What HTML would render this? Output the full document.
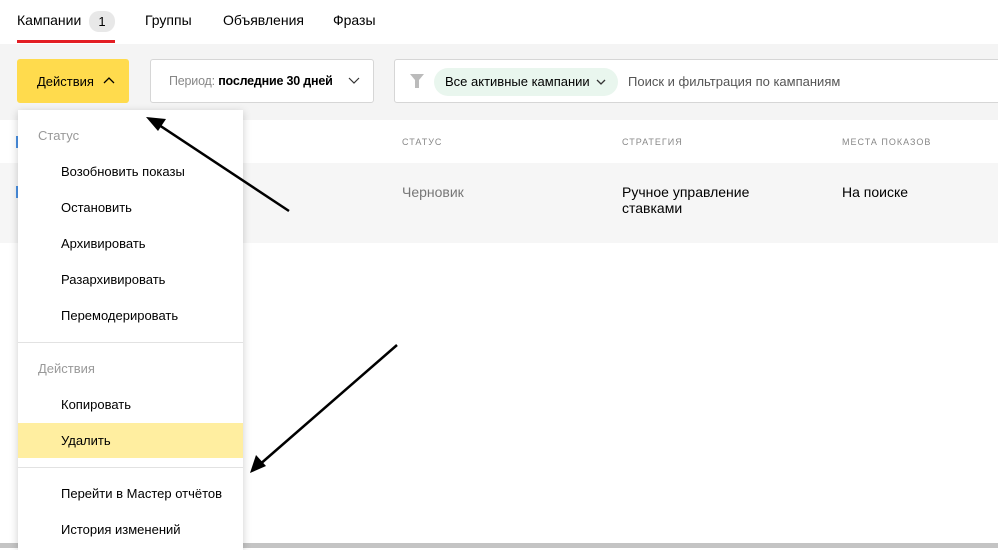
<!DOCTYPE html>
<html><head><meta charset="utf-8"><style>
*{margin:0;padding:0;box-sizing:border-box}
body{width:998px;height:548px;overflow:hidden;position:relative;background:#fff;font-family:"Liberation Sans",sans-serif;font-size:13px;color:#000}
.a{position:absolute}
.tab{top:12px;font-size:14px;color:#000}
.m{left:18px;width:225px;font-size:13px}
.h{color:#999;left:38px}
.it{left:61px}
.cap{font-size:9px;color:#888;letter-spacing:1px;top:137px}
</style></head><body>
<div class="a" style="left:0;top:0;width:998px;height:44px;background:#fff"></div>
<div class="a tab" style="left:17px">Кампании</div>
<div class="a" style="left:89px;top:11px;width:26px;height:21px;border-radius:10px;background:#e8e8e8;font-size:13px;text-align:center;line-height:21px">1</div>
<div class="a tab" style="left:145px">Группы</div>
<div class="a tab" style="left:223px">Объявления</div>
<div class="a tab" style="left:333px">Фразы</div>
<div class="a" style="left:17px;top:40px;width:98px;height:3px;background:#e31e24"></div>
<div class="a" style="left:0;top:44px;width:998px;height:76px;background:#f4f4f4"></div>
<div class="a" style="left:17px;top:59px;width:112px;height:44px;background:#ffdb4d;border-radius:3px"></div>
<div class="a" style="left:37px;top:74px;font-size:13px">Действия</div>
<svg class="a" style="left:103px;top:76px" width="12" height="8"><path d="M1 7L6 2L11 7" fill="none" stroke="#000" stroke-width="1.3"/></svg>
<div class="a" style="left:150px;top:59px;width:224px;height:44px;background:#fff;border:1px solid #d6d6d6;border-radius:3px"></div>
<div class="a" style="left:169px;top:74px;font-size:12.5px;letter-spacing:-0.2px"><span style="color:#888">Период:</span> <b>последние 30 дней</b></div>
<svg class="a" style="left:348px;top:77px" width="12" height="8"><path d="M1 1L6 6L11 1" fill="none" stroke="#333" stroke-width="1.2"/></svg>
<div class="a" style="left:394px;top:59px;width:610px;height:44px;background:#fff;border:1px solid #d6d6d6;border-radius:3px"></div>
<svg class="a" style="left:410px;top:74px" width="14" height="14"><path d="M0 0H14L9 6V14L5 14V6Z" fill="#bbb"/></svg>
<div class="a" style="left:434px;top:68px;width:184px;height:28px;border-radius:14px;background:#e9f6ee"></div>
<div class="a" style="left:445px;top:74px;font-size:13px">Все активные кампании</div>
<svg class="a" style="left:596px;top:79px" width="10" height="6"><path d="M1 1L5 5L9 1" fill="none" stroke="#333" stroke-width="1.3"/></svg>
<div class="a" style="left:628px;top:74px;font-size:13px;color:#555">Поиск и фильтрация по кампаниям</div>
<div class="a cap" style="left:402px">СТАТУС</div>
<div class="a cap" style="left:622px">СТРАТЕГИЯ</div>
<div class="a cap" style="left:842px">МЕСТА ПОКАЗОВ</div>
<div class="a" style="left:0;top:163px;width:998px;height:80px;background:#f6f6f6"></div>
<div class="a" style="left:402px;top:184px;color:#777;font-size:14px">Черновик</div>
<div class="a" style="left:622px;top:184px;font-size:14px;line-height:16px">Ручное управление<br>ставками</div>
<div class="a" style="left:842px;top:184px;font-size:14px">На поиске</div>
<div class="a" style="left:16px;top:136px;width:3px;height:12px;background:#4a90e2"></div>
<div class="a" style="left:16px;top:186px;width:3px;height:12px;background:#4a90e2"></div>
<div class="a" style="left:0;top:543px;width:998px;height:5px;background:#c4c4c4"></div>
<div class="a" style="left:18px;top:110px;width:225px;height:440px;background:#fff;box-shadow:0 2px 8px rgba(0,0,0,.2)"></div>
<div class="a m h" style="top:128px">Статус</div>
<div class="a m it" style="top:164px">Возобновить показы</div>
<div class="a m it" style="top:200px">Остановить</div>
<div class="a m it" style="top:236px">Архивировать</div>
<div class="a m it" style="top:272px">Разархивировать</div>
<div class="a m it" style="top:308px">Перемодерировать</div>
<div class="a" style="left:18px;top:342px;width:225px;height:1px;background:#e2e2e2"></div>
<div class="a m h" style="top:361px">Действия</div>
<div class="a m it" style="top:397px">Копировать</div>
<div class="a" style="left:18px;top:423px;width:225px;height:35px;background:#ffeea0"></div>
<div class="a m it" style="top:433px">Удалить</div>
<div class="a" style="left:18px;top:467px;width:225px;height:1px;background:#e2e2e2"></div>
<div class="a m it" style="top:486px">Перейти в Мастер отчётов</div>
<div class="a m it" style="top:522px">История изменений</div>
<svg class="a" style="left:0;top:0" width="998" height="548">
<line x1="289" y1="211" x2="156" y2="123" stroke="#000" stroke-width="2.5"/>
<path d="M146 117L166 119L158 131Z" fill="#000"/>
<line x1="397" y1="345" x2="258" y2="466" stroke="#000" stroke-width="2.5"/>
<path d="M250 473L256 455L266 466Z" fill="#000"/>
</svg>
</body></html>
